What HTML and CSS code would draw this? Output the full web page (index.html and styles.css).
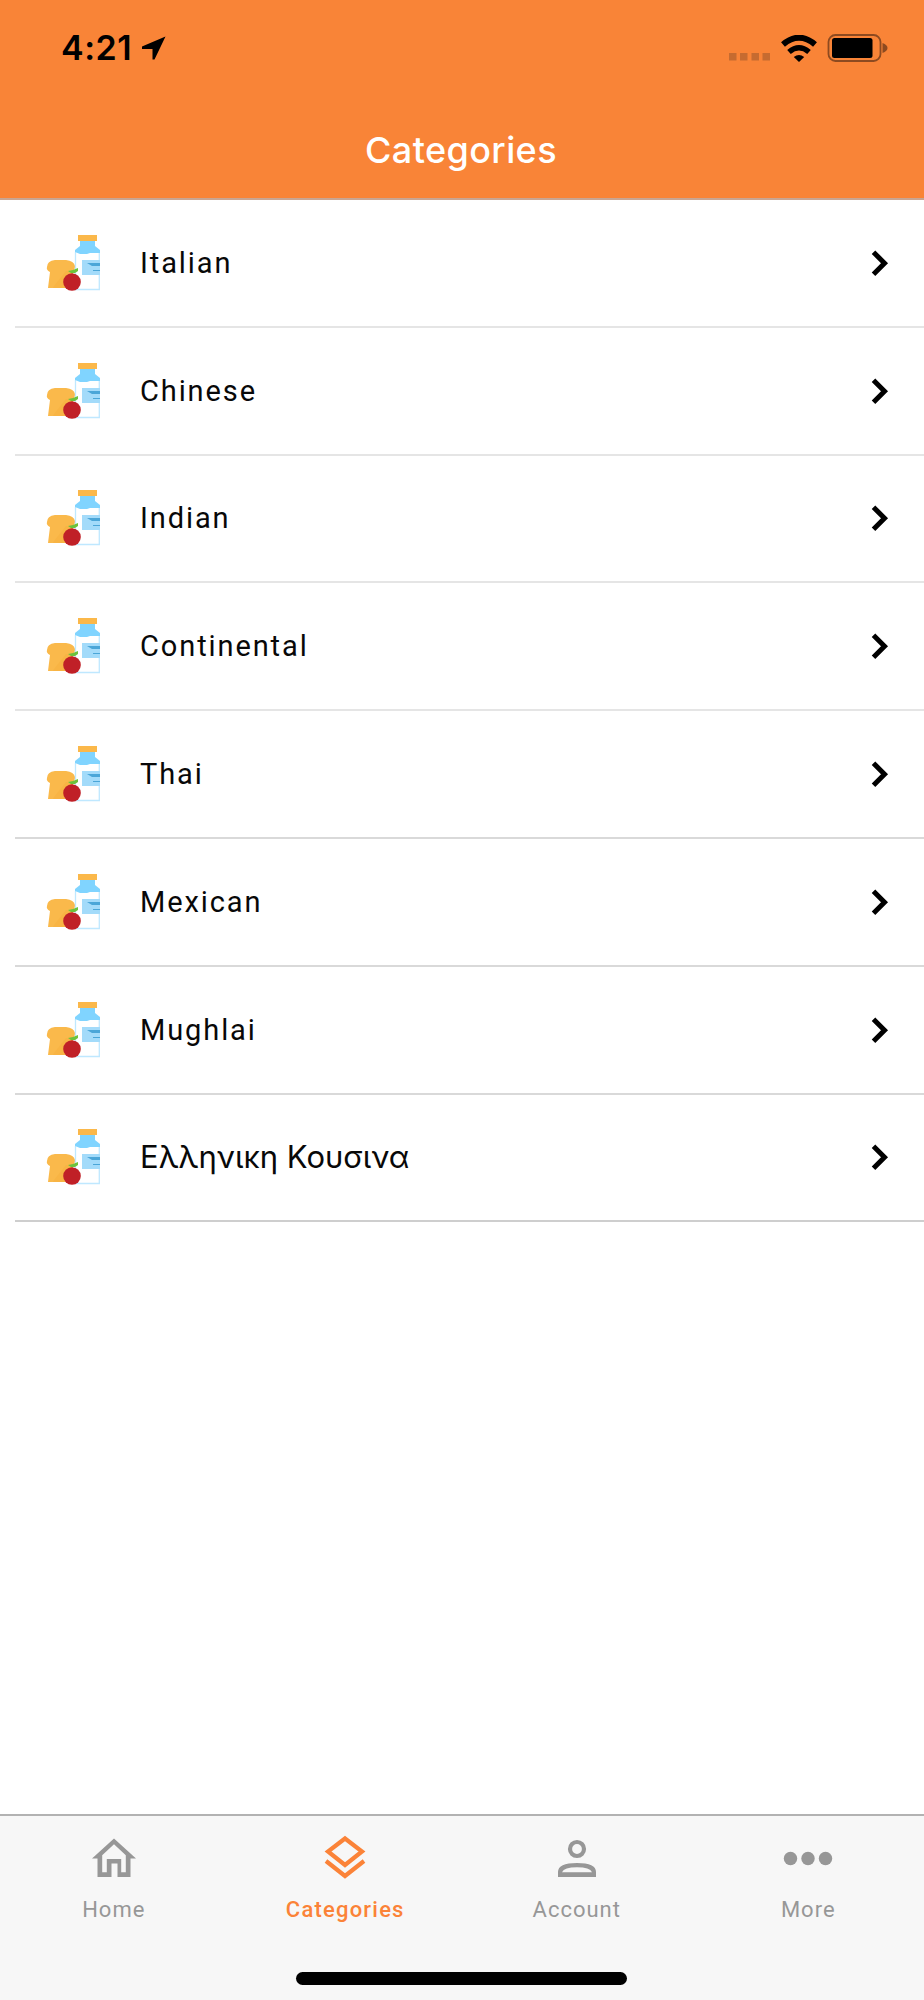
FILE: index.html
```
<!DOCTYPE html>
<html lang="en">
<head>
<meta charset="utf-8">
<title>Categories</title>
<link rel="stylesheet" href="styles.css">
</head>
<body>
<svg class="defs" aria-hidden="true">
  <symbol id="groceries" viewBox="0 0 54 56">
    <path d="M1 32q0-6 8-7h11q8 1 9 6 0 4-2 5v17H2l2-16q-4-2-3-5z" fill="#fab94b"/>
    <path d="M8 51l12-15 6 1v16H7z" fill="#f8b444"/>
    <path d="M34 6h15v6l5 5v38H29V17l5-5z" fill="#fff"/>
    <path d="M29.500 17v37.500H54M53.300 17v37" fill="none" stroke="#bfe8ff" stroke-width="1.300"/>
    <path d="M34 6h15v5l5 4v3H44l-3 1h-7l-5-2v-2l5-4z" fill="#80d4ff"/>
    <path d="M32 0h19v6H32z" fill="#fbb84a"/>
    <path d="M36 25h18v15H36z" fill="#a3dbfa"/>
    <path d="M41 28h13v3h-8zM47 35h7v1h-7z" fill="#4ba6d8"/>
    <circle cx="26" cy="47" r="8.800" fill="#c02027"/>
    <path d="M22 36l5-1 5-2v3l-3 2h-4z" fill="#6cc23c"/>
  </symbol>
  <symbol id="chevron" viewBox="0 0 18 26">
    <path d="M2.500 2.200L13.500 13.200 2.500 24.200" fill="none" stroke="#000" stroke-width="5"/>
  </symbol>
</svg>
<div class="screen">
  <header class="header">
    <div class="status">
      <span class="time">4:21</span>
      <svg class="location" viewBox="0 0 24 24"><path d="M23.500 .5L12.500 23.500H10.500V13H0V10.500z"/></svg>
      <svg class="signal" viewBox="0 0 42 8"><path d="M0 0h7.500v7.500H0zM11 0h7.500v7.500H11zM22.500 0H30v7.500h-7.500zM33.500 0H41v7.500h-7.500z"/></svg>
      <svg class="wifi" viewBox="0 0 36 27"><g fill="none" stroke="#000"><path d="M2 9.500Q18-4 34 9.500" stroke-width="6"/><path d="M8 17Q18 8.500 28 17" stroke-width="5.500"/></g><path d="M12.800 22Q18 18 23.200 22L18 27z"/></svg>
      <svg class="battery" viewBox="0 0 61 30"><rect x="1.500" y="2" width="52" height="26" rx="7" fill="none" stroke="#8d4a20" stroke-width="1.800"/><rect x="5" y="5" width="40.500" height="20" rx="2.500"/><path d="M55.500 10q5 2 5 5t-5 5z" fill="#8d4a20"/></svg>
    </div>
    <h1 class="title">Categories</h1>
  </header>
  <main class="list">
    <div class="row"><svg class="food"><use href="#groceries"/></svg><span class="name">Italian</span><svg class="chevron"><use href="#chevron"/></svg></div>
    <div class="row"><svg class="food"><use href="#groceries"/></svg><span class="name">Chinese</span><svg class="chevron"><use href="#chevron"/></svg></div>
    <div class="row"><svg class="food"><use href="#groceries"/></svg><span class="name">Indian</span><svg class="chevron"><use href="#chevron"/></svg></div>
    <div class="row"><svg class="food"><use href="#groceries"/></svg><span class="name">Continental</span><svg class="chevron"><use href="#chevron"/></svg></div>
    <div class="row dark"><svg class="food"><use href="#groceries"/></svg><span class="name">Thai</span><svg class="chevron"><use href="#chevron"/></svg></div>
    <div class="row dark"><svg class="food"><use href="#groceries"/></svg><span class="name">Mexican</span><svg class="chevron"><use href="#chevron"/></svg></div>
    <div class="row dark"><svg class="food"><use href="#groceries"/></svg><span class="name">Mughlai</span><svg class="chevron"><use href="#chevron"/></svg></div>
    <div class="row darker"><svg class="food"><use href="#groceries"/></svg><span class="name greek" lang="el">Ελληνικη Κουσινα</span><svg class="chevron"><use href="#chevron"/></svg></div>
  </main>
  <footer class="footer">
    <nav class="tabs">
      <div class="tab"><svg class="icon" viewBox="0 0 48 48"><path class="solid" fill-rule="evenodd" d="M24 3.500L46 23.500H40.500V42H27.500V28.500h-6V42H7.500V23.500H2zM24 9.300L12.200 20.200V37.300h4.600V24h14.400v13.300h4.600V20.200z"/></svg><span>Home</span></div>
      <div class="tab active"><svg class="icon" viewBox="0 0 48 48"><path class="line" d="M24 3.500L41 16.500 24 30 7 16.500zM5 26L24 41 43 26"/></svg><span>Categories</span></div>
      <div class="tab"><svg class="icon" viewBox="0 0 48 48"><circle class="line" cx="24" cy="14" r="7"/><path class="solid" fill-rule="evenodd" d="M5 42V37q0-9 19-9t19 9v5zM9 37.300h30Q37 32.200 24 32.200T9 37.300z"/></svg><span>Account</span></div>
      <div class="tab"><svg class="icon dots" viewBox="0 0 52 48"><circle cx="8.500" cy="23.500" r="6.700"/><circle cx="26" cy="23.500" r="6.700"/><circle cx="43.500" cy="23.500" r="6.700"/></svg><span>More</span></div>
    </nav>
    <div class="home-bar"></div>
  </footer>
</div>
</body>
</html>
```
FILE: styles.css
```
* { box-sizing: border-box; }
body { margin: 0; background: #fff; }
.defs { position: absolute; width: 0; height: 0; }
.screen { width: 924px; height: 2000px; display: flex; flex-direction: column; overflow: hidden; }
.header { height: 200px; background: #f98437; border-bottom: 2px solid #c9a592; }
.status { height: 100px; padding: 0 36px 4px 61px; display: flex; align-items: center; }
.time { font: 600 34px/40px Inter, sans-serif; color: #000; letter-spacing: 0.5px; }
.location { width: 24px; height: 24px; margin-left: 10px; }
.signal { width: 42px; height: 8px; margin: 17px 10px 0 auto; fill: #c66b30; }
.wifi { width: 36px; height: 27px; margin-right: 10px; }
.battery { width: 61px; height: 30px; }
.title { margin: 30px 0 0; padding-right: 2px; text-align: center; color: #fff; font: 500 36px/40px Inter, sans-serif; letter-spacing: 0.4px; }
.list { flex: 1; padding-left: 15px; }
.row { height: 127.8px; padding: 0 35px 0 31px; display: flex; align-items: center; border-bottom: 2px solid #e5e5e5; }
.row.dark { border-color: #d9d9d9; }
.row.darker { border-color: #cecece; }
.food { width: 54px; height: 56px; flex: none; }
.name { flex: 1; margin-left: 40px; font: 400 29px/40px Roboto, sans-serif; letter-spacing: 1.9px; color: #080808; }
.name.greek { font: 400 31px/40px Inter, sans-serif; letter-spacing: 0; }
.chevron { width: 18px; height: 26px; flex: none; }
.footer { height: 186px; background: #f7f7f7; border-top: 2px solid #b2b2b2; display: flex; flex-direction: column; align-items: center; }
.tabs { width: 926px; margin-left: -2px; padding-top: 19px; display: grid; grid-template-columns: repeat(4, 1fr); }
.tab { display: flex; flex-direction: column; align-items: center; gap: 12px; color: #979797; font: 400 22px/30px Roboto, sans-serif; letter-spacing: 1px; }
.icon { width: 48px; height: 48px; fill: currentColor; }
.icon.dots { width: 52px; }
.line { fill: none; stroke: currentColor; stroke-width: 4.200; }
.tab.active { color: #fb8338; font-weight: 500; }
.tab.active span { letter-spacing: 1.2px; }
.home-bar { width: 331px; height: 13px; margin: 47px 2px 0 0; border-radius: 7px; background: #000; }
```
